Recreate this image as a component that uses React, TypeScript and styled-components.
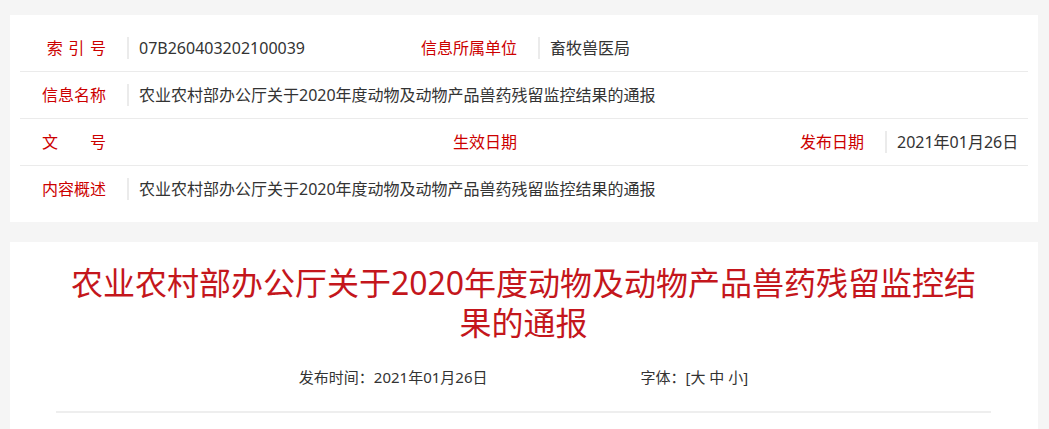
import React from 'react';
import styled, { createGlobalStyle } from 'styled-components';

type Cell = {
  label?: string;
  value?: string;
  span?: string;
};

const GlobalStyle = createGlobalStyle`
  html, body {
    margin: 0;
    padding: 0;
    background: #f5f5f5;
  }
  body {
    font-family: "Noto Sans", "Noto Sans CJK SC", sans-serif;
    color: #333333;
  }
`;

const infoRows: Cell[][] = [
  [
    { label: '索 引 号', value: '07B260403202100039' },
    { label: '信息所属单位', value: '畜牧兽医局', span: '4 / -1' },
  ],
  [{ label: '信息名称', value: '农业农村部办公厅关于2020年度动物及动物产品兽药残留监控结果的通报', span: '2 / -1' }],
  [
    { label: '文\u3000\u3000号' },
    { label: '生效日期' },
    { label: '发布日期', value: '2021年01月26日' },
  ],
  [{ label: '内容概述', value: '农业农村部办公厅关于2020年度动物及动物产品兽药残留监控结果的通报', span: '2 / -1' }],
];

export default function App(): JSX.Element {
  return (
    <>
      <GlobalStyle />
      <Page>
        <InfoCard>
          {infoRows.map((row, i) => (
            <InfoRow key={i}>
              {row.map((cell, j) => (
                <React.Fragment key={j}>
                  <Label>{cell.label}</Label>
                  <Value $filled={!!cell.value} $span={cell.span}>
                    {cell.value}
                  </Value>
                </React.Fragment>
              ))}
            </InfoRow>
          ))}
        </InfoCard>

        <ArticleCard>
          <Title>农业农村部办公厅关于2020年度动物及动物产品兽药残留监控结果的通报</Title>
          <Meta>
            <span>发布时间：2021年01月26日</span>
            <span>字体：[大 中 小]</span>
          </Meta>
          <Divider />
        </ArticleCard>
      </Page>
    </>
  );
}

const Page = styled.div`
  padding: 15px 11px 0 10px;
`;

const InfoCard = styled.section`
  background: #ffffff;
  padding: 10px;
`;

const InfoRow = styled.div`
  display: grid;
  grid-template-columns: 107px 251px 160px 207px 140px 1fr;
  align-items: center;
  height: 46px;
  border-bottom: 1px solid #ebebeb;
  font-size: 16px;

  &:last-child {
    border-bottom: none;
  }
`;

const Label = styled.div`
  color: #cc0000;
  text-align: right;
  padding-right: 21px;
  white-space: nowrap;
  word-spacing: 1.5px;
  line-height: 22px;
`;

const Value = styled.div<{ $filled: boolean; $span?: string }>`
  grid-column: ${({ $span }) => $span || 'auto'};
  border-left: ${({ $filled }) => ($filled ? '2px solid #ebebeb' : 'none')};
  padding-left: 10px;
  line-height: 22px;
  min-height: 22px;
  color: #333333;
  white-space: nowrap;
`;

const ArticleCard = styled.article`
  background: #ffffff;
  margin-top: 20px;
  padding: 21px 47px 60px 46px;
`;

const Title = styled.h1`
  margin: 0;
  padding: 0 10px;
  font-size: 32px;
  font-weight: normal;
  line-height: 40px;
  text-align: center;
  color: #c4161c;
`;

const Meta = styled.div`
  display: flex;
  justify-content: center;
  gap: 153px;
  margin: 20px 0;
  font-size: 15px;
  line-height: 28px;
  color: #333333;
`;

const Divider = styled.hr`
  margin: 0;
  border: none;
  height: 2px;
  background: #eeeeee;
`;
